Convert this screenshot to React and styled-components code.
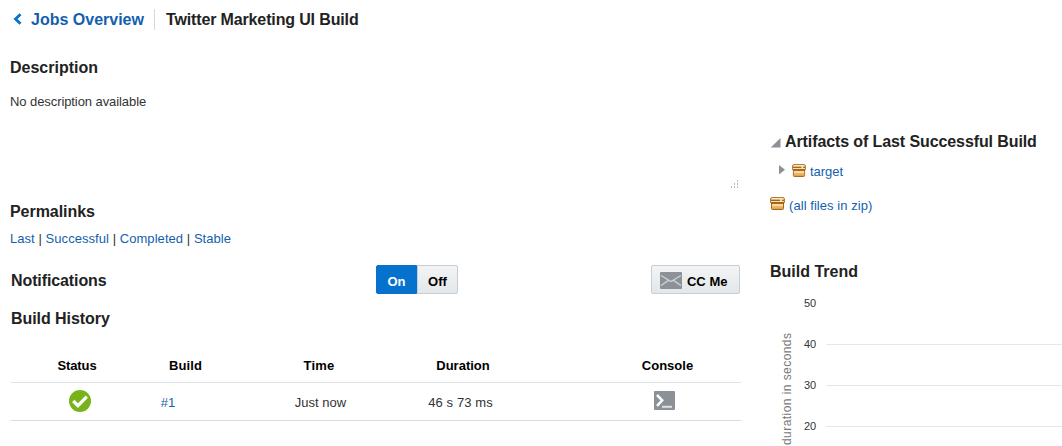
import React from "react";
import styled, { createGlobalStyle } from "styled-components";

const GlobalStyle = createGlobalStyle`
  body { margin: 0; background: #fff; overflow: hidden; }
  * { box-sizing: border-box; }
`;
const Page = styled.div`
  width: 1062px; height: 446px; overflow: hidden;
  font: 13px/20px "Liberation Sans", Arial, sans-serif; color: #333;
  a { color: #145fad; text-decoration: none; }
  svg { display: block; flex: none; }
`;
const Header = styled.header`
  display: flex; height: 38px; padding: 9px 0 0 13px;
`;
const BackLink = styled.a`
  display: flex; width: 142px; padding-top: 1px; border-right: 1px solid #d0dae2; height: 21px;
  font-size: 16px; font-weight: bold; gap: 9px;
  svg { margin-top: 3px; }
`;
const Heading = styled.h2`
  margin: 0; font-size: 16px; line-height: 20px; font-weight: bold; color: #222;
  white-space: nowrap; letter-spacing: ${(p) => p.$track || 0}px;
`;
const Title = styled(Heading).attrs({ as: "h1" })`padding: 1px 0 0 11px;`;
const Columns = styled.main`display: grid; grid-template-columns: 770px 292px;`;
const Left = styled.div`padding-left: 10px;`;
const Right = styled.aside`padding-top: 94px;`;
const Text = styled.span`white-space: nowrap; letter-spacing: ${(p) => p.$track || 0}px;`;
const Description = styled.section`
  width: 730px; height: 164px; padding-top: 20px;
  display: flex; flex-direction: column; gap: 14px;
  svg { margin: auto 1px 14px auto; }
`;
const Permalinks = styled.nav`
  height: 63px; display: flex; flex-direction: column; gap: 7px;
`;
const Toolbar = styled.section`
  display: flex; height: 29px; width: 730px; padding-left: 1px;
  ${Heading} { width: 365px; padding-top: 6px; }
`;
const Button = styled.button`
  height: 29px; width: ${(p) => p.$width}px; padding: 4px ${(p) => p.$right || 0}px 0 0; margin: 0;
  display: flex; align-items: center; justify-content: center; gap: 5px;
  border: 1px solid ${(p) => (p.$on ? "#0572ce" : "#c4ced7")};
  border-radius: ${(p) => p.$radius || "2px"};
  background: ${(p) => (p.$on ? "#0572ce" : "linear-gradient(#f3f4f5, #e3e7e9)")};
  color: ${(p) => (p.$on ? "#fff" : "#000")};
  font: bold 13px/20px "Liberation Sans", Arial, sans-serif;
  letter-spacing: ${(p) => p.$track || 0}px;
  svg { margin-top: -2px; }
`;
const Push = styled.div`margin-left: auto;`;
const History = styled.section`
  width: 730px; margin-left: 1px; padding-top: 15px;
`;
const Row = styled.div`
  display: grid; grid-template-columns: 132px 85px 183px 104px 79px 147px;
  height: ${(p) => (p.$head ? 54 : 38)}px;
  padding-top: ${(p) => (p.$head ? 27 : 10)}px;
  border-bottom: 1px solid ${(p) => (p.$head ? "#dfe3e6" : "#d3dde6")};
  font-weight: ${(p) => (p.$head ? "bold" : "normal")};
  color: ${(p) => (p.$head ? "#000" : "#333")};
`;
const Cell = styled.div`
  display: flex; justify-content: center; white-space: nowrap;
  grid-column: ${(p) => p.$col};
  padding-right: ${(p) => p.$right || 0}px;
  padding-left: ${(p) => p.$left || 0}px;
  letter-spacing: ${(p) => p.$track || 0}px;
  svg { margin-top: ${(p) => p.$rise || 0}px; }
`;
const Disclosure = styled.div`
  display: flex; gap: 4px; height: 30px;
  svg { margin-top: 6px; }
`;
const FileRow = styled.div`
  display: flex; height: 34px; gap: 4px; padding-left: ${(p) => p.$indent || 0}px;
`;
const Arrow = styled.span`width: 9px; padding-top: 3px;`;
const IconWrap = styled.span`padding-top: ${(p) => p.$top}px;`;
const Trend = styled.section`padding-top: 32px;`;

const ArchiveIcon = ({ w = 15 }) => (
  <svg width={w} height="13" viewBox="0 0 15 13" preserveAspectRatio="none">
    <path d="M1.5 6h12v5.5q0 1-1 1h-10q-1 0-1-1z" fill="#e3a450" stroke="#a66714" />
    <path d="M2 7h11v2H2z" fill="#fad9a4" />
    <path d="M2 9h11v1.5H2z" fill="#efb96e" />
    <path d="M1.5.5h12l1 1v4H.5v-4z" fill="#e6b470" stroke="#b07a30" />
    <path d="M2 1h11v1H2z" fill="#f1e8da" />
    <path d="M1 3.5h13" stroke="#a66714" />
    <path d="M1 4.5h13" stroke="#fbe0ae" />
    <path d="M1 6h13" stroke="#8f510b" />
    <path d="M10 2h2v2h-2z" fill="#f3dfbf" />
  </svg>
);

const Grip = () => (
  <svg width="9" height="9" viewBox="0 0 9 9" fill="#b8b8b8" shapeRendering="crispEdges">
    {[[7, 1], [4, 4], [7, 4], [1, 7], [4, 7], [7, 7]].map(([x, y]) => (
      <rect key={`${x}-${y}`} x={x} y={y} width="1" height="2" />
    ))}
  </svg>
);

export default function App() {
  return (
    <Page>
      <GlobalStyle />
      <Header>
        <BackLink href="#">
          <svg width="9" height="12" viewBox="0 0 9 12"><path d="M7.5 1.2 2.5 6l5 4.8" fill="none" stroke="#0572ce" strokeWidth="2.8" /></svg>
          <Text>Jobs Overview</Text>
        </BackLink>
        <Title $track={-0.14}>Twitter Marketing UI Build</Title>
      </Header>
      <Columns>
        <Left>
          <Description>
            <Heading>Description</Heading>
            <Text $track={-0.08}>No description available</Text>
            <Grip />
          </Description>
          <Permalinks>
            <Heading $track={-0.05}>Permalinks</Heading>
            <Text $track={0.055}>
              <a href="#">Last</a> | <a href="#">Successful</a> | <a href="#">Completed</a> | <a href="#">Stable</a>
            </Text>
          </Permalinks>
          <Toolbar>
            <Heading $track={-0.1}>Notifications</Heading>
            <Button $on $width={41} $radius="2px 0 0 2px">On</Button>
            <Button $width={41} $radius="0 2px 2px 0">Off</Button>
            <Push>
              <Button $width={89} $track={0.05} $right={3.5}>
                <svg width="22" height="17" viewBox="0 0 22 17">
                  <rect width="22" height="17" rx="1" fill="#8b9196" />
                  <path d="M1 3.5 11 9.5l10-6M1 13.5l7.6-5.2M21 13.5l-7.6-5.2" fill="none" stroke="#cfd2d5" strokeWidth="1.4" />
                </svg>
                CC Me
              </Button>
            </Push>
          </Toolbar>
          <History>
            <Heading $track={-0.06}>Build History</Heading>
            <Row $head>
              <Cell $col={1} $track={-0.1}>Status</Cell>
              <Cell $col={2} $track={0.1}>Build</Cell>
              <Cell $col={3} $track={0.2} $right={1}>Time</Cell>
              <Cell $col={4}>Duration</Cell>
              <Cell $col={6}>Console</Cell>
            </Row>
            <Row>
              <Cell $col={1} $left={5} $rise={-3}>
                <svg width="22" height="22" viewBox="0 0 22 22">
                  <circle cx="11" cy="11" r="11" fill="#77b41c" />
                  <path d="m4.2 11 4.8 4.7 8.8-9" fill="none" stroke="#fff" strokeWidth="3.2" />
                </svg>
              </Cell>
              <Cell $col={2} $right={35}><a href="#">#1</a></Cell>
              <Cell $col={3} $left={2}>Just now</Cell>
              <Cell $col={4} $right={5} $track={0.1}>46 s 73 ms</Cell>
              <Cell $col={6} $right={6} $rise={-2}>
                <svg width="21" height="19" viewBox="0 0 21 19">
                  <rect width="21" height="19" rx="1" fill="#8b9196" />
                  <path d="m3 4 5.2 5.3L3 14.8" fill="none" stroke="#fff" strokeWidth="2.5" />
                  <path d="M8 15.8h10" stroke="#dfe2e4" strokeWidth="2" />
                </svg>
              </Cell>
            </Row>
          </History>
        </Left>
        <Right>
          <Disclosure>
            <svg width="11" height="10" viewBox="0 0 11 10"><path d="M10.5 0v9.5H.7z" fill="#8b9196" /></svg>
            <Heading $track={-0.1}>Artifacts of Last Successful Build</Heading>
          </Disclosure>
          <FileRow $indent={9}>
            <Arrow><svg width="6" height="10" viewBox="0 0 6 10"><path d="M0 0l6 4.8L0 9.6z" fill="#8b9196" /></svg></Arrow>
            <IconWrap $top={2}><ArchiveIcon w={14} /></IconWrap>
            <a href="#"><Text $track={-0.05}>target</Text></a>
          </FileRow>
          <FileRow>
            <IconWrap $top={1}><ArchiveIcon /></IconWrap>
            <a href="#"><Text $track={0.06}>(all files in zip)</Text></a>
          </FileRow>
          <Trend>
            <Heading>Build Trend</Heading>
            <svg width="292" height="164" viewBox="0 0 292 164" fontFamily="Liberation Sans">
              <g stroke="#e5e7ec" shapeRendering="crispEdges">
                <path d="M56 62.5h236M56 103.5h236M56 144.5h236" />
              </g>
              <g fontSize="11" fill="#333">
                <text x="34" y="25">50</text>
                <text x="34" y="66">40</text>
                <text x="34" y="107">30</text>
                <text x="34" y="148">20</text>
              </g>
              <text transform="translate(20.5 163) rotate(-90)" fontSize="12" fill="#777" textLength="112">duration in seconds</text>
            </svg>
          </Trend>
        </Right>
      </Columns>
    </Page>
  );
}
